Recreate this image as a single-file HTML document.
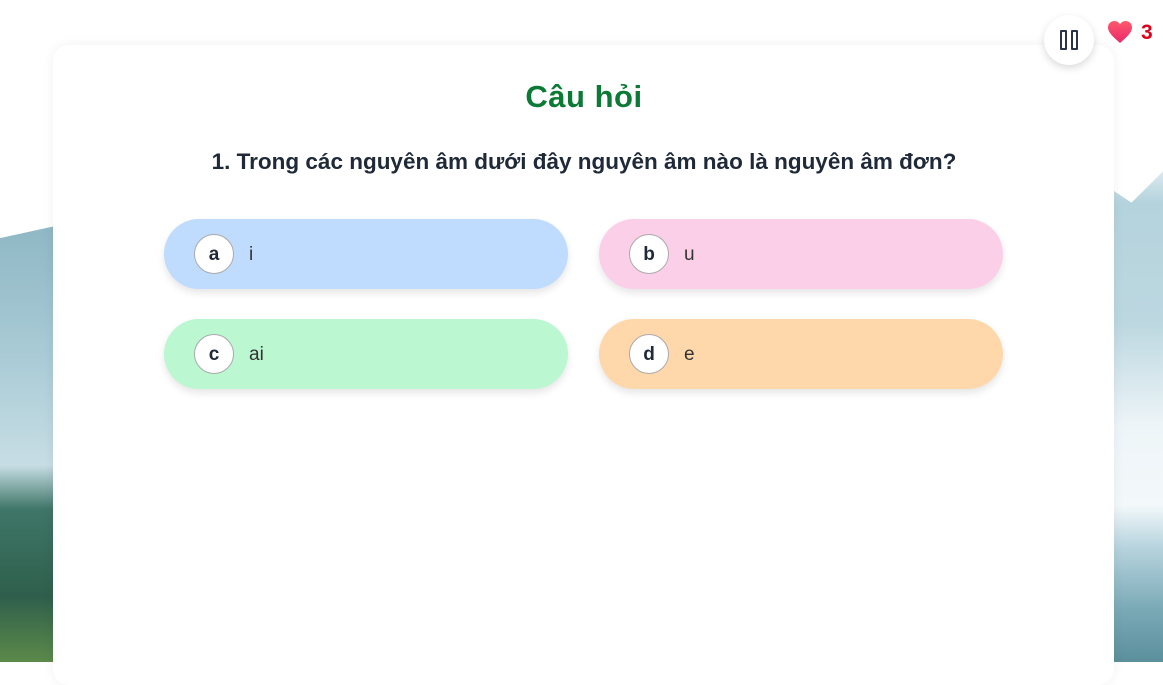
<!DOCTYPE html>
<html><head><meta charset="utf-8"><style>
*{margin:0;padding:0;box-sizing:border-box}
body{width:1163px;height:662px;overflow:hidden;position:relative;font-family:"Liberation Sans",sans-serif;background:#fff}
.bgl{position:absolute;left:0;top:225px;width:60px;height:437px;background:linear-gradient(180deg,#8fb7c4 0%,#a9cbd6 30%,#c7dde4 55%,#3f7668 65%,#2f5f4c 85%,#5c8a4a 100%);clip-path:polygon(0 3%,100% 0,100% 100%,0 100%)}
.bgr{position:absolute;left:1100px;top:140px;width:63px;height:522px;background:linear-gradient(180deg,#fff 0%,#b5d3dd 12%,#bcd7e0 35%,#eef5f8 55%,#f3f8fa 70%,#b7d4de 78%,#7aa9b6 90%,#5b8f9c 100%);clip-path:polygon(0 8%,50% 12%,100% 6%,100% 100%,0 100%)}
.card{position:absolute;left:53px;top:45px;width:1061px;height:640px;background:#fff;border-radius:16px;box-shadow:0 0 12px rgba(0,0,0,.06)}
h1{position:absolute;left:0;width:1168px;top:79px;text-align:center;font-size:31px;color:#0b7a34;font-weight:bold;letter-spacing:0.5px}
.q{position:absolute;left:0;width:1168px;top:149px;text-align:center;font-size:22.5px;color:#1f2937;font-weight:bold}
.opt{position:absolute;width:404px;height:70px;border-radius:35px;box-shadow:0 4px 8px rgba(0,0,0,.1);font-size:19px;color:#333}
.opt .c{position:absolute;left:30px;top:15px;width:40px;height:40px;border-radius:50%;background:#fff;border:1px solid #aaa;text-align:center;line-height:40px;font-weight:bold;color:#1f2937}
.opt .t{position:absolute;left:85px;top:25px}
.pause{position:absolute;left:1044px;top:15px;width:50px;height:50px;border-radius:50%;background:#fff;box-shadow:0 3px 8px rgba(0,0,0,.15)}
.pause i{position:absolute;top:15px;width:7px;height:20px;border:2.5px solid #2a3446;border-radius:1px}
</style></head><body>
<div class="bgl"></div><div class="bgr"></div>
<div class="card"></div>
<h1>Câu hỏi</h1>
<div class="q">1. Trong các nguyên âm dưới đây nguyên âm nào là nguyên âm đơn?</div>
<div class="opt" style="left:164px;top:219px;background:#bfdbfe"><div class="c">a</div><div class="t">i</div></div>
<div class="opt" style="left:599px;top:219px;background:#fbcfe8"><div class="c">b</div><div class="t">u</div></div>
<div class="opt" style="left:164px;top:319px;background:#bbf7d0"><div class="c">c</div><div class="t">ai</div></div>
<div class="opt" style="left:599px;top:319px;background:#fed7aa"><div class="c">d</div><div class="t">e</div></div>
<div class="pause"><i style="left:16px"></i><i style="left:27px"></i></div>
<svg style="position:absolute;left:1107px;top:20px" width="26" height="24" viewBox="0 0 26 24"><defs><linearGradient id="h" x1="0" y1="0" x2="0" y2="1"><stop offset="0" stop-color="#ff5a6a"/><stop offset="1" stop-color="#e8286e"/></linearGradient></defs><path d="M13 23C5 16 1 12 1 7.5 1 3.5 4 1 7.5 1 10 1 12 2.5 13 4.5 14 2.5 16 1 18.5 1 22 1 25 3.5 25 7.5 25 12 21 16 13 23Z" fill="url(#h)"/></svg>
<div style="position:absolute;left:1141px;top:21px;font-size:21px;font-weight:bold;color:#e0001a">3</div>
</body></html>
